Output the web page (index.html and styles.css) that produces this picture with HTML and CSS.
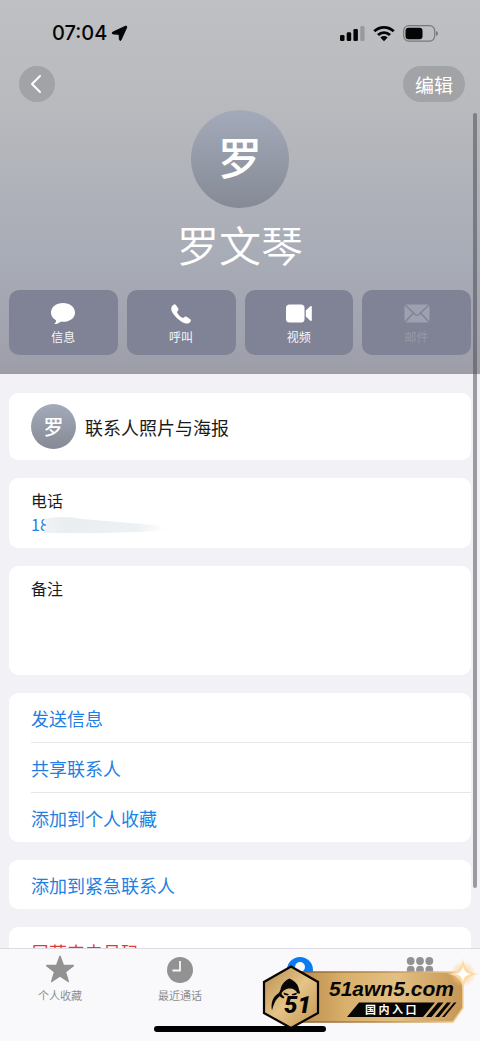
FILE: index.html
```html
<!DOCTYPE html>
<html lang="zh-CN">
<head>
<meta charset="utf-8">
<meta name="viewport" content="width=device-width, initial-scale=1">
<title>罗文琴</title>
<link rel="stylesheet" href="styles.css">
</head>
<body>
<div class="screen">
  <main class="content">
    <header class="hero">
      <div class="status">
        <div class="status-time">
          <span>07:04</span>
          <svg width="17" height="17" viewBox="0 0 17 17" aria-hidden="true"><path stroke="#050506" stroke-linejoin="round" d="M1.500 7.300 14.500 1.200q1.600-.4 1.200 1.200L10 15q-.9 1.300-1.500-.2L8 9.300 2 8.900q-1.600-.5-.5-1.600Z"/></svg>
        </div>
        <div class="status-icons">
          <svg width="25" height="17" viewBox="0 0 25 17" aria-hidden="true"><rect y="10" width="4.500" height="6" rx="1.300"/><rect x="6.700" y="7.200" width="4.500" height="8.800" rx="1.300"/><rect x="13.400" y="4" width="4.500" height="12" rx="1.300"/><rect x="20.300" y="1" width="4.200" height="15" rx="1.300" opacity=".2"/></svg>
          <svg width="22" height="17" viewBox="0 0 22 17" aria-hidden="true"><g fill="none" stroke="#050506" stroke-width="2.900"><path d="M1.300 6.300a14 14 0 0 1 19.400 0"/><path d="M5 10a8.700 8.700 0 0 1 12 0"/></g><path d="M7.300 12.400a5.400 5.400 0 0 1 7.400 0L11 16.200Z"/></svg>
          <svg width="36" height="17" viewBox="0 0 36 17" aria-hidden="true"><rect x=".7" y=".7" width="31" height="15.400" rx="5" fill="none" stroke="#77787b" stroke-width="1.200"/><rect x="2.500" y="2.700" width="17" height="11.500" rx="3"/><path d="M33 6v5q2-.7 2-2.500T33 6Z" fill="#77787b"/></svg>
        </div>
      </div>
      <nav class="topnav">
        <button class="round-button" type="button" aria-label="返回"><svg width="12" height="20" viewBox="0 0 12 20" aria-hidden="true"><path d="M10 2 2 10l8 8" fill="none" stroke="#fff" stroke-width="2" stroke-linecap="round" stroke-linejoin="round"/></svg></button>
        <button class="edit-button" type="button">编辑</button>
      </nav>
      <div class="avatar">罗</div>
      <h1 class="name">罗文琴</h1>
      <div class="actions">
        <button class="action" type="button">
          <svg width="26" height="24" viewBox="0 0 26 24" aria-hidden="true"><path fill="#fff" d="M13 2C6.200 2 1 6.100 1 11.500c0 3.400 1.800 6.100 5 7.700.2 1.600-.7 2.900-1.800 3.900 2.500.1 4.600-.9 6.200-2.400 8.500.9 14.600-3.100 14.600-9.200C25 6.100 19.800 2 13 2Z"/></svg>
          <span>信息</span>
        </button>
        <button class="action" type="button">
          <svg width="24" height="24" viewBox="0 0 24 24" aria-hidden="true"><path fill="#fff" d="M3.400 4.700C4.700 3 6 2.700 7.100 4.200l2 3c.8 1.300.4 2-.6 3-.6.6-.5 1.200 0 2 1 1.700 2.700 3.400 4.400 4.400.8.500 1.400.6 2 0 1-1 1.700-1.400 3-.6l3 2c1.500 1.100 1.200 2.400-.5 3.700-2.300 1.900-6.500.7-10.800-3.200C5.500 14.900 2.200 10.900 2.200 7.500c0-1.100.5-2 1.200-2.800Z"/></svg>
          <span>呼叫</span>
        </button>
        <button class="action" type="button">
          <svg width="28" height="24" viewBox="0 0 28 24" aria-hidden="true"><rect x="1" y="3.500" width="18.500" height="18" rx="3.500" fill="#fff"/><path fill="#fff" d="m20.800 9.500 4.500-4.200q1.500-1 1.500.7v13q0 1.700-1.500.7l-4.500-4.200Z"/></svg>
          <span>视频</span>
        </button>
        <button class="action action-off" type="button" disabled>
          <svg width="28" height="24" viewBox="0 0 28 24" aria-hidden="true"><rect x="1.500" y="3.500" width="25" height="18" rx="2" fill="#9da0af"/><path fill="none" stroke="#808395" stroke-width="1.400" d="m2 4 10.500 9.700q1.500 1.200 3 0L26 4M2 21l8.500-9M26 21l-8.500-9"/></svg>
          <span>邮件</span>
        </button>
      </div>
    </header>

    <div class="cards">
      <section class="card">
        <a class="poster" href="#poster"><span class="mini-avatar" aria-hidden="true">罗</span><span>联系人照片与海报</span></a>
      </section>
      <section class="card field">
        <h2 class="label">电话</h2>
        <div class="phone">
          <a class="phone-link" href="#call">18</a>
          <svg class="smudge" width="140" height="20" viewBox="0 0 140 20" aria-hidden="true"><defs><linearGradient id="smear"><stop offset="0" stop-color="#f0f3f6"/><stop offset=".2" stop-color="#e9eef1"/><stop offset=".75" stop-color="#edf1f3"/><stop offset="1" stop-color="#fff"/></linearGradient></defs><path fill="url(#smear)" d="M4 3Q22-1 42 3l48 4q22 1 38 5-14 4-34 4l-34 1H3Q8 10 4 3Z"/></svg>
        </div>
      </section>
      <section class="card field notes">
        <h2 class="label">备注</h2>
      </section>
      <section class="card list">
        <button class="row" type="button">发送信息</button>
        <button class="row" type="button">共享联系人</button>
        <button class="row" type="button">添加到个人收藏</button>
      </section>
      <section class="card list">
        <button class="row" type="button">添加到紧急联系人</button>
      </section>
      <section class="card list">
        <button class="row row-danger" type="button">屏蔽来电号码</button>
      </section>
    </div>
  </main>

  <footer class="tabbar">
    <nav class="tabs">
      <a class="tab" href="#favorites">
        <svg width="28" height="28" viewBox="0 0 28 28" aria-hidden="true"><path fill="#929292" stroke="#929292" stroke-width="1.500" stroke-linejoin="round" d="m14 1.200 3.400 9.400h9.900l-7.900 6.300 2.900 9.600-8.300-5.700-8.300 5.700 2.900-9.600-7.900-6.300h9.900Z"/></svg>
        <span>个人收藏</span>
      </a>
      <a class="tab" href="#recents">
        <svg width="28" height="28" viewBox="0 0 28 28" aria-hidden="true"><circle cx="14" cy="15" r="13" fill="#929292"/><path d="M14 6v9.500H6.500" fill="none" stroke="#f8f8f8" stroke-width="1.800"/></svg>
        <span>最近通话</span>
      </a>
      <a class="tab" href="#contacts" aria-label="通讯录">
        <svg width="28" height="28" viewBox="0 0 28 28" aria-hidden="true"><circle cx="14" cy="15" r="13" fill="#087cf0"/><circle cx="14" cy="12" r="5" fill="#f8f8f8"/><path d="M5 24q3-7 9-7t9 7q-9 7-18 0Z" fill="#f8f8f8"/></svg>
      </a>
      <a class="tab" href="#keypad" aria-label="拨号键盘">
        <svg width="28" height="28" viewBox="0 0 28 28" aria-hidden="true"><g fill="#929292"><circle cx="4.700" cy="6" r="3.900"/><circle cx="14" cy="6" r="3.900"/><circle cx="23.300" cy="6" r="3.900"/><circle cx="4.700" cy="14.700" r="3.900"/><circle cx="14" cy="14.700" r="3.900"/><circle cx="23.300" cy="14.700" r="3.900"/><circle cx="4.700" cy="23.400" r="3.900"/><circle cx="14" cy="23.400" r="3.900"/><circle cx="23.300" cy="23.400" r="3.900"/></g></svg>
      </a>
    </nav>
    <div class="home-bar"></div>
  </footer>

  <div class="scroll-thumb"></div>

  <svg class="badge" width="220" height="90" viewBox="0 0 220 90" role="img" aria-label="51awn5.com 国内入口">
    <defs>
      <linearGradient id="gold" x1="0" y1="0" x2="1" y2="0"><stop offset="0" stop-color="#b98a4a"/><stop offset=".3" stop-color="#d9b06c"/><stop offset=".6" stop-color="#e2c083"/><stop offset="1" stop-color="#c69654"/></linearGradient>
      <linearGradient id="goldHex" x1="0" y1="0" x2="1" y2="1"><stop offset="0" stop-color="#b88b4d"/><stop offset=".5" stop-color="#e5c487"/><stop offset="1" stop-color="#c2924e"/></linearGradient>
      <linearGradient id="rim" x1="0" y1="0" x2="1" y2="0"><stop offset="0" stop-color="#8b6332"/><stop offset=".5" stop-color="#b68a4e"/><stop offset="1" stop-color="#f3d59b"/></linearGradient>
      <radialGradient id="glow"><stop offset="0" stop-color="#fff"/><stop offset=".3" stop-color="#ffd7a0" stop-opacity=".85"/><stop offset="1" stop-color="#ffc786" stop-opacity="0"/></radialGradient>
    </defs>
    <path d="M36 21H203V57L193 71H36Z" fill="url(#gold)" stroke="url(#rim)" stroke-width="1.500"/>
    <path d="M31 15.500 58 31v31L31 77 4 62V31Z" fill="url(#goldHex)" stroke="#080604" stroke-width="2.200"/>
    <path fill="#080604" fill-rule="evenodd" d="M29.500 27.500c3.500 2 8 4.500 9 9 .3 2.500 1.500 4 1.500 6h-2.500c-1-3-4-5-7.500-5s-7.500 2-8.500 5c.5 1.700 1.500 2.500 3 3.500l-1 1.500c-1.500-.5-2.800-1.200-3.800-2.200-4.800 3.500-6 8.500-7.700 14.200-1.500-7.500 1-13.500 5.500-16.500 1.300-1 2.500-2 3-4.500 1-5.500 4.500-9 9-11Z"/>
    <path fill="#080604" d="m23.500 41.500 5.500 1.800-1.200 1.200-3.600-.8ZM37 41.500l-5.500 1.800 1.200 1.200 3.600-.8Z"/>
    <text class="badge-mark" x="24" y="62">51</text>
    <text class="badge-site" x="69" y="45">51awn5.com</text>
    <path fill="#080604" d="M99 51.500h76L163 66H87ZM178 51.500h5.500l-12 14.500H166ZM187 51.500h4L179 66h-4ZM194 51.500h2.500l-12 14.500H182Z"/>
    <text class="badge-sub" x="105" y="63">国 内 入 口</text>
    <circle cx="203" cy="23" r="13" fill="url(#glow)"/>
    <path fill="#ffd9a3" d="M203 7q1 15 16 16-15 1-16 16-1-15-16-16 15-1 16-16Z"/>
    <path fill="#fff" d="M203 15q1 7 8 8-7 1-8 8-1-7-8-8 7-1 8-8Z"/>
  </svg>
</div>
</body>
</html>
```

FILE: styles.css
```css
* { box-sizing: border-box; }

body {
  margin: 0;
  font-family: "Noto Sans CJK SC", sans-serif;
  color: #1b1b1d;
  background: #f1f1f6;
}

button {
  border: 0;
  padding: 0;
  font: inherit;
  background: none;
}

a { color: inherit; text-decoration: none; }
svg { display: block; flex: none; }

.screen {
  position: relative;
  display: flex;
  flex-direction: column;
  height: 100vh;
  overflow: hidden;
}

.content { flex: 1; min-height: 0; overflow: hidden; }

.hero {
  display: flex;
  flex-direction: column;
  padding: 22px 9px 19px;
  background: linear-gradient(#bfc0c4, #b9babe 27%, #a8acb6 68%, #a1a3af 90%, #9c9da7);
}

.status {
  display: flex;
  justify-content: space-between;
  align-items: center;
  height: 22px;
  margin-bottom: 22px;
  padding: 0 32px 0 43px;
  fill: #050506;
}

.status-time {
  display: flex;
  align-items: center;
  gap: 4px;
  font: 500 20px/22px Inter, sans-serif;
  color: #050506;
}

.status-icons { display: flex; align-items: center; gap: 8px; }

.topnav {
  display: flex;
  justify-content: space-between;
  padding: 0 6px 0 10px;
}

.round-button, .edit-button {
  display: flex;
  align-items: center;
  justify-content: center;
  height: 36px;
  border-radius: 18px;
  color: #fff;
  background: #a2a3a6;
}

.round-button { width: 36px; padding-right: 2px; }
.edit-button { padding: 0 12px; font-size: 19px; }

.avatar, .mini-avatar {
  display: flex;
  align-items: center;
  justify-content: center;
  border-radius: 50%;
  color: #fff;
  font-weight: 500;
  background: linear-gradient(#a3aab9, #868a96);
}

.avatar {
  align-self: center;
  width: 98px;
  height: 98px;
  margin: 8px 0;
  padding-bottom: 6px;
  font-size: 44px;
}

.mini-avatar { width: 45px; height: 45px; font-size: 20px; }

.name {
  margin: 0 0 18px;
  font-size: 42px;
  font-weight: 350;
  line-height: 56px;
  text-align: center;
  color: #fff;
}

.actions {
  display: grid;
  grid-template-columns: repeat(4, 1fr);
  gap: 9px;
}

.action {
  display: flex;
  flex-direction: column;
  align-items: center;
  gap: 4px;
  padding: 11px 0 10px;
  border-radius: 10px;
  font-size: 12px;
  line-height: 16px;
  color: #f6f6fa;
  background: #808395;
}

.action-off { color: #9498a8; }

.cards {
  display: flex;
  flex-direction: column;
  gap: 18px;
  padding: 19px 9px;
}

.card { border-radius: 9px; background: #fff; }

.poster {
  display: flex;
  align-items: center;
  gap: 9px;
  padding: 11px 22px;
  font-size: 18px;
}

.field { padding: 10px 22px; }

.label {
  margin: 0;
  font-size: 16px;
  font-weight: 400;
  line-height: 24px;
}

.phone {
  position: relative;
  font-size: 16px;
  line-height: 24px;
  padding-bottom: 2px;
  color: #1f7fe2;
}

.smudge { position: absolute; left: 9px; top: 4px; }

.notes { min-height: 109px; }

.list { padding-left: 22px; }

.row {
  display: block;
  width: 100%;
  height: 49px;
  font-size: 18px;
  text-align: left;
  color: #1f7fe2;
}

.row + .row { height: 50px; border-top: 1px solid #e6e6ea; }
.row-danger { color: #e5383b; }

.tabbar {
  padding: 6px 0 9px;
  border-top: 1px solid #dcdce0;
  background: #f9f9fb;
}

.tabs { display: grid; grid-template-columns: repeat(4, 1fr); }

.tab {
  display: flex;
  flex-direction: column;
  align-items: center;
  gap: 4px;
  font-size: 11px;
  line-height: 16px;
  color: #8d8d8f;
}

.home-bar {
  width: 36%;
  height: 6px;
  margin: 23px auto 0;
  border-radius: 3px;
  background: #000;
}

.scroll-thumb {
  position: absolute;
  top: 113px;
  right: 3px;
  bottom: 153px;
  width: 4px;
  border-radius: 2px;
  background: rgba(70, 70, 75, .5);
}

.badge { position: absolute; right: 0; bottom: 0; }

.badge-mark { font: italic 900 24px Roboto, sans-serif; fill: #080604; }
.badge-site { font: italic 700 21px "Liberation Sans", sans-serif; fill: #080604; }
.badge-sub { font: 700 11px "Noto Sans CJK SC", sans-serif; fill: #fff; }
```
